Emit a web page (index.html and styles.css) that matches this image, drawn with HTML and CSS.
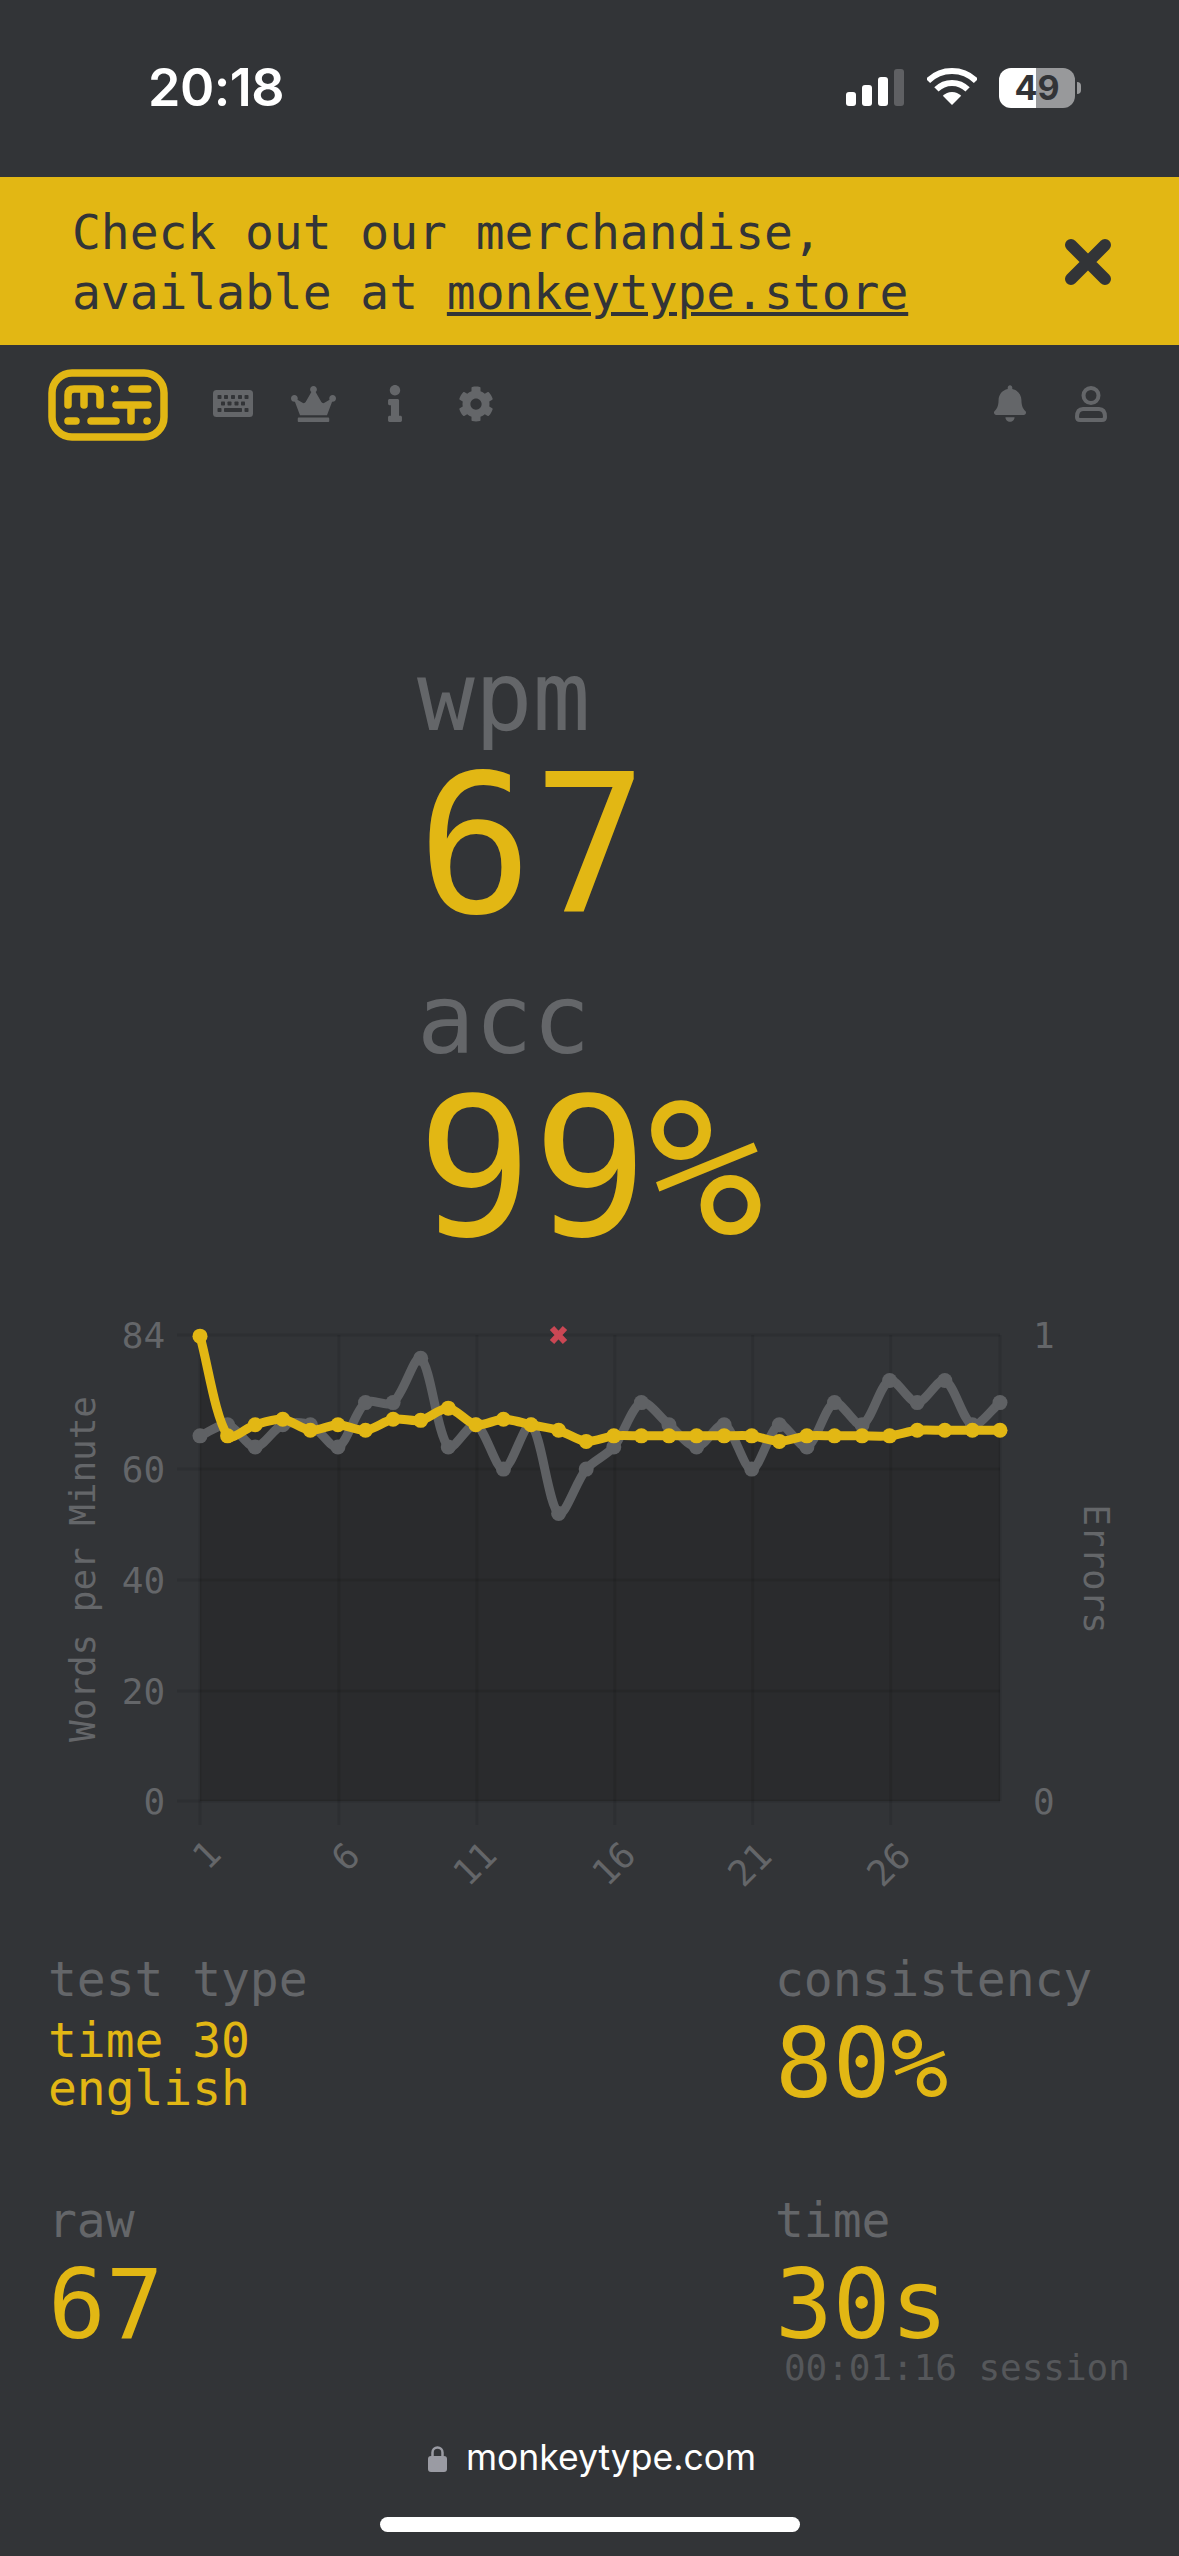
FILE: index.html
```html
<!DOCTYPE html>
<html lang="en">
<head>
    <meta charset="UTF-8">
    <meta name="viewport" content="width=device-width, initial-scale=1.0">
    <title>Monkeytype</title>
    <link rel="stylesheet" href="styles.css">
</head>
<body>
    <div class="status-bar">
        <span class="clock">20:18</span>
        <div class="status-icons">
            <div class="signal">
                <span class="bar bar1"></span>
                <span class="bar bar2"></span>
                <span class="bar bar3"></span>
                <span class="bar bar4"></span>
            </div>
            <svg class="wifi" viewBox="0 0 50 37">
                <path d="M1 13A34 34 0 0 1 49 13" fill="none" stroke="#fff" stroke-width="6"/>
                <path d="M9.4 21.4A22 22 0 0 1 40.6 21.4" fill="none" stroke="#fff" stroke-width="6"/>
                <path d="M25 37L15.8 27.8A13 13 0 0 1 34.2 27.8Z" fill="#fff"/>
            </svg>
            <div class="battery">49</div>
            <span class="battery-nub"></span>
        </div>
    </div>

    <div class="banner">
        <div class="banner-text">Check out our merchandise,<br>available at <a href="#">monkeytype.store</a></div>
        <svg class="banner-close" viewBox="0 0 48 46">
            <path d="M7 6L41 40M41 6L7 40" fill="none" stroke="#323437" stroke-width="12" stroke-linecap="round"/>
        </svg>
    </div>

    <div class="nav">
        <svg class="logo" viewBox="0 0 120 72" fill="none" stroke="#e2b714" stroke-width="7.5" stroke-linecap="round">
            <rect x="4" y="4" width="112" height="64" rx="20"/>
            <path d="M20 36V26Q20 20 26 20H46Q52 20 52 26V36M36 20V36"/>
            <path d="M66.7 20H66.8M84 20H99.7M68 36H100M83 36V52M20 52H28M43 52H68M99 52H99.1"/>
        </svg>
        <div class="nav-slot">
            <svg class="icon-keyboard" viewBox="0 0 40 27">
                <rect width="40" height="27" rx="3.5" fill="#646669"/>
                <g fill="#323437">
                    <rect x="4.5" y="5" width="4" height="4" rx=".8"/><rect x="11" y="5" width="4" height="4" rx=".8"/><rect x="18" y="5" width="4" height="4" rx=".8"/><rect x="25" y="5" width="4" height="4" rx=".8"/><rect x="31.500" y="5" width="4" height="4" rx=".8"/>
                    <rect x="8" y="11.500" width="4" height="4" rx=".8"/><rect x="14.500" y="11.500" width="4" height="4" rx=".8"/><rect x="21.500" y="11.500" width="4" height="4" rx=".8"/><rect x="28" y="11.500" width="4" height="4" rx=".8"/>
                    <rect x="4.500" y="18" width="4" height="4" rx=".8"/><rect x="11" y="18" width="18" height="4" rx=".8"/><rect x="31.500" y="18" width="4" height="4" rx=".8"/>
                </g>
            </svg>
        </div>
        <div class="nav-slot">
            <svg class="icon-crown" viewBox="0 0 640 512"><path fill="#646669" d="M528 448H112c-8.800 0-16 7.200-16 16v32c0 8.800 7.200 16 16 16h416c8.800 0 16-7.200 16-16v-32c0-8.800-7.200-16-16-16zm64-320c-26.500 0-48 21.500-48 48 0 7.100 1.600 13.700 4.400 19.800L476 239.200c-15.400 9.200-35.300 4-44.200-11.600L350.300 85C361 76.200 368 63 368 48c0-26.500-21.500-48-48-48s-48 21.500-48 48c0 15 7 28.200 17.700 37l-81.500 142.600c-8.900 15.600-28.900 20.800-44.200 11.600l-72.300-43.400c2.700-6 4.400-12.700 4.400-19.800 0-26.500-21.500-48-48-48S0 149.500 0 176s21.500 48 48 48c2.600 0 5.200-.4 7.700-.8L128 416h384l72.300-192.800c2.500.4 5.100.8 7.700.8 26.500 0 48-21.500 48-48s-21.500-48-48-48z"/></svg>
        </div>
        <div class="nav-slot">
            <svg class="icon-info" viewBox="0 0 192 512"><path fill="#646669" d="M20 424.229h20V279.771H20c-11.046 0-20-8.954-20-20V212c0-11.046 8.954-20 20-20h112c11.046 0 20 8.954 20 20v212.229h20c11.046 0 20 8.954 20 20V492c0 11.046-8.954 20-20 20H20c-11.046 0-20-8.954-20-20v-47.771c0-11.046 8.954-20 20-20zM96 0C56.235 0 24 32.235 24 72s32.235 72 72 72 72-32.235 72-72S135.764 0 96 0z"/></svg>
        </div>
        <div class="nav-slot">
            <svg class="icon-cog" viewBox="0 0 512 512"><path fill="#646669" d="M487.400 315.700l-42.600-24.600c4.300-23.200 4.300-47 0-70.200l42.600-24.600c4.900-2.800 7.100-8.600 5.500-14-11.100-35.600-30-67.800-54.700-94.600-3.800-4.100-10-5.100-14.800-2.300L380.800 110c-17.900-15.400-38.500-27.300-60.800-35.100V25.800c0-5.600-3.900-10.500-9.400-11.700-36.700-8.200-74.300-7.800-109.200 0-5.500 1.200-9.400 6.100-9.400 11.700V75c-22.200 7.900-42.800 19.800-60.800 35.100L88.700 85.500c-4.900-2.800-11-1.900-14.800 2.300-24.700 26.700-43.600 58.900-54.700 94.600-1.700 5.400.6 11.200 5.500 14L67.300 221c-4.300 23.200-4.300 47 0 70.200l-42.600 24.600c-4.900 2.800-7.100 8.600-5.500 14 11.100 35.600 30 67.800 54.700 94.600 3.800 4.100 10 5.100 14.800 2.300l42.600-24.600c17.900 15.400 38.500 27.300 60.800 35.100v49.200c0 5.600 3.900 10.500 9.400 11.700 36.700 8.200 74.300 7.800 109.200 0 5.500-1.200 9.400-6.100 9.400-11.700v-49.200c22.200-7.900 42.800-19.800 60.800-35.100l42.600 24.600c4.900 2.800 11 1.900 14.800-2.300 24.700-26.700 43.600-58.900 54.700-94.600 1.500-5.500-.7-11.300-5.600-14.100zM256 336c-44.100 0-80-35.900-80-80s35.900-80 80-80 80 35.900 80 80-35.900 80-80 80z"/></svg>
        </div>
        <div class="nav-spacer"></div>
        <div class="nav-slot">
            <svg class="icon-bell" viewBox="0 0 448 512"><path fill="#646669" d="M224 512c35.320 0 63.970-28.650 63.970-64H160.030c0 35.350 28.650 64 63.970 64zm215.390-149.710c-19.320-20.760-55.470-51.990-55.470-154.290 0-77.700-54.480-139.900-127.940-155.160V32c0-17.670-14.320-32-31.980-32s-31.980 14.330-31.980 32v20.840C118.560 68.100 64.080 130.300 64.080 208c0 102.300-36.150 133.530-55.470 154.290-6 6.450-8.660 14.160-8.610 21.710.11 16.400 12.980 32 32.100 32h383.800c19.120 0 32-15.600 32.100-32 .05-7.550-2.610-15.270-8.610-21.710z"/></svg>
        </div>
        <div class="nav-slot">
            <svg class="icon-user" viewBox="0 0 36 37" fill="none" stroke="#646669" stroke-width="4">
                <circle cx="18" cy="10.500" r="7.500"/>
                <path d="M10 24H26Q32 24 32 32Q32 35 29 35H7Q4 35 4 32Q4 24 10 24Z"/>
            </svg>
        </div>
    </div>

    <div class="big-stats">
        <div class="big-stat">
            <div class="big-label">wpm</div>
            <div class="big-value">67</div>
        </div>
        <div class="big-stat">
            <div class="big-label">acc</div>
            <div class="big-value">99%</div>
        </div>
    </div>

    <svg id="chart" class="chart" viewBox="0 1290 1179 640">
        <path id="wpmFill" fill="#2a2b2d"/>
        <g class="grid">
            <path d="M177 1335H1000M177 1469H1000M177 1580H1000M177 1691H1000M177 1801H1000"/>
            <path d="M200 1335V1825M338.900 1335V1825M476.900 1335V1825M614.800 1335V1825M752.700 1335V1825M890.700 1335V1825M1000 1335V1801"/>
        </g>
        <g class="axis-text">
            <text x="165" y="1348" text-anchor="end">84</text>
            <text x="165" y="1482" text-anchor="end">60</text>
            <text x="165" y="1593" text-anchor="end">40</text>
            <text x="165" y="1704" text-anchor="end">20</text>
            <text x="165" y="1814" text-anchor="end">0</text>
            <text x="1033" y="1348">1</text>
            <text x="1033" y="1814">0</text>
            <text transform="translate(95 1569) rotate(-90)" text-anchor="middle">Words per Minute</text>
            <text transform="translate(1084 1569) rotate(90)" text-anchor="middle">Errors</text>
            <text transform="translate(207 1855) rotate(-45)" text-anchor="middle" dy="12">1</text>
            <text transform="translate(346 1857) rotate(-45)" text-anchor="middle" dy="12">6</text>
            <text transform="translate(475 1864) rotate(-45)" text-anchor="middle" dy="12">11</text>
            <text transform="translate(614 1864) rotate(-45)" text-anchor="middle" dy="12">16</text>
            <text transform="translate(750 1865) rotate(-45)" text-anchor="middle" dy="12">21</text>
            <text transform="translate(889 1865) rotate(-45)" text-anchor="middle" dy="12">26</text>
        </g>
        <g id="rawLine" class="series series-raw"></g>
        <path d="M552 1328L565 1342M565 1328L552 1342" fill="none" stroke="#ca4754" stroke-width="6"/>
        <g id="wpmLine" class="series series-wpm"></g>
    </svg>

    <div class="more-stats">
        <div class="more-stat">
            <div class="small-label">test type</div>
            <div class="small-value">time 30<br>english</div>
        </div>
        <div class="more-stat">
            <div class="small-label">consistency</div>
            <div class="medium-value">80%</div>
        </div>
        <div class="more-stat">
            <div class="small-label">raw</div>
            <div class="medium-value">67</div>
        </div>
        <div class="more-stat">
            <div class="small-label">time</div>
            <div class="medium-value">30s</div>
            <div class="session">00:01:16 session</div>
        </div>
    </div>

    <div class="safari-bar">
        <div class="url">
            <svg class="lock" viewBox="0 0 19 27">
                <path d="M4.500 13V7.500a5 5 0 0 1 10 0V13" fill="none" stroke="#9a9ba3" stroke-width="2.500"/>
                <rect y="11" width="19" height="16" rx="3" fill="#9a9ba3"/>
            </svg>
            <span>monkeytype.com</span>
        </div>
        <div class="home-indicator"></div>
    </div>

    <script src="chart.js"></script>
</body>
</html>
```

FILE: styles.css
```css
body {
    margin: 0;
    width: 1179px;
    height: 2556px;
    overflow: hidden;
    background-color: #323437;
    color: #646669;
    font-family: "DejaVu Sans Mono", "Liberation Mono", monospace;
    letter-spacing: -0.004em;
}

/* phone status bar */
.status-bar {
    height: 177px;
    display: flex;
    justify-content: space-between;
    padding: 64px 98px 0 148px;
    box-sizing: border-box;
}
.clock {
    font-family: Inter, sans-serif;
    font-weight: 600;
    font-size: 52px;
    line-height: 48px;
    letter-spacing: -0.5px;
    color: white;
}
.status-icons {
    display: flex;
    align-items: flex-start;
    height: 44px;
    padding-top: 4px;
}
.signal {
    display: flex;
    align-items: flex-end;
    gap: 6px;
    height: 37px;
    margin-top: 1px;
    margin-right: 23px;
}
.bar {
    width: 10px;
    border-radius: 3px;
    background-color: white;
}
.bar1 { height: 14px; }
.bar2 { height: 21px; }
.bar3 { height: 29px; }
.bar4 { height: 37px; background-color: #5f6063; }
.wifi {
    width: 50px;
    height: 37px;
    margin-right: 22px;
}
.battery {
    width: 76px;
    height: 40px;
    border-radius: 12px;
    background: linear-gradient(90deg, white 49%, #98999b 49%);
    color: #323437;
    font-family: Inter, sans-serif;
    font-weight: 700;
    font-size: 34px;
    line-height: 40px;
    letter-spacing: 0;
    text-align: center;
}
.battery-nub {
    width: 4px;
    height: 12px;
    margin: 14px 0 0 2px;
    border-radius: 0 4px 4px 0;
    background-color: #98999b;
}

/* merch banner */
.banner {
    height: 168px;
    display: flex;
    justify-content: space-between;
    align-items: center;
    padding: 2px 67px 0 72px;
    box-sizing: border-box;
    background-color: #e2b714;
    color: #323437;
    font-size: 48px;
    line-height: 60px;
}
.banner-text a {
    color: #323437;
}
.banner-close {
    width: 48px;
    height: 46px;
}

/* top nav */
.nav {
    display: flex;
    align-items: center;
    height: 72px;
    padding: 24px 48px 0;
}
.logo {
    width: 120px;
    height: 72px;
    margin-right: 24px;
}
.nav-slot {
    width: 81px;
    height: 72px;
    margin-top: -3px;
    display: flex;
    justify-content: center;
    align-items: center;
}
.nav-spacer {
    flex: 1;
}
.icon-keyboard { width: 40px; height: 27px; }
.icon-crown { width: 45px; height: 36px; }
.icon-info { width: 14px; height: 37px; }
.icon-cog { width: 36px; height: 36px; }
.icon-bell { width: 32px; height: 37px; }
.icon-user { width: 36px; height: 37px; }

/* wpm + acc */
.big-stats {
    display: flex;
    flex-direction: column;
    gap: 30px;
    margin-top: 208px;
    padding-left: 417px;
}
.big-label {
    font-size: 96px;
    line-height: 96px;
}
.big-value {
    margin-top: 5px;
    font-size: 192px;
    line-height: 192px;
    color: #e2b714;
}

/* result graph */
.chart {
    display: block;
    width: 1179px;
    height: 640px;
    margin-top: 25px;
}
.grid path {
    fill: none;
    stroke: rgba(0, 0, 0, 0.09);
    stroke-width: 3;
}
.axis-text text {
    font-size: 36px;
    fill: #646669;
}
.series path {
    fill: none;
    stroke-width: 9;
}
.series-raw path { stroke: #5f6164; }
.series-raw circle { fill: #5f6164; }
.series-wpm path { stroke: #e2b714; }
.series-wpm circle { fill: #e2b714; }

/* bottom stats */
.more-stats {
    display: grid;
    grid-template-columns: 727px 1fr;
    grid-auto-rows: 241px;
    padding-left: 48px;
    margin-top: 25px;
}
.small-label {
    font-size: 48px;
    line-height: 48px;
}
.small-value {
    margin-top: 13px;
    font-size: 48px;
    line-height: 48px;
    color: #e2b714;
}
.medium-value {
    margin-top: 13px;
    font-size: 96px;
    line-height: 96px;
    color: #e2b714;
}
.session {
    margin: -3px 0 0 9px;
    font-size: 36px;
    line-height: 36px;
    color: #55575a;
}

/* safari url bar */
.safari-bar {
    display: flex;
    flex-direction: column;
    align-items: center;
    margin-top: -2px;
    padding-left: 5px;
}
.url {
    display: flex;
    align-items: center;
    gap: 19px;
    color: white;
    font-family: Inter, sans-serif;
    font-size: 35.5px;
    line-height: 46px;
    letter-spacing: 0;
}
.lock {
    width: 19px;
    height: 27px;
}
.home-indicator {
    width: 420px;
    height: 15px;
    margin-top: 36px;
    margin-left: -5px;
    border-radius: 8px;
    background-color: white;
}
```

FILE: chart.js
```js
const rawData = [66, 68, 64, 68, 68, 64, 72, 72, 80, 64, 68, 60, 68, 52, 60, 64, 72, 68, 64, 68, 60, 68, 64, 72, 68, 76, 72, 76, 68, 72];
const wpmData = [84, 66, 68, 69, 67, 68, 67, 69, 68.8, 71, 68, 69, 68, 67, 65, 66, 66, 66, 66, 66, 66, 65, 66, 66, 66, 66, 67, 67, 67, 67];
const TENSION = 0.3;

function toPoints(data) {
    return data.map((v, i) => ({ x: 200 + i * 27.586, y: 1801.5 - v * 5.54 }));
}

// same spline as a line chart with tension
function splinePath(pts) {
    const ctrl = pts.map((p, i) => {
        const a = pts[i - 1] || p;
        const b = pts[i + 1] || p;
        const d01 = Math.hypot(p.x - a.x, p.y - a.y);
        const d12 = Math.hypot(b.x - p.x, b.y - p.y);
        const sum = d01 + d12 || 1;
        const fa = TENSION * d01 / sum;
        const fb = TENSION * d12 / sum;
        return {
            px: p.x - fa * (b.x - a.x),
            py: p.y - fa * (b.y - a.y),
            nx: p.x + fb * (b.x - a.x),
            ny: p.y + fb * (b.y - a.y)
        };
    });
    let d = 'M' + pts[0].x + ' ' + pts[0].y;
    for (let i = 1; i < pts.length; i++) {
        d += 'C' + ctrl[i - 1].nx + ' ' + ctrl[i - 1].ny + ' ' + ctrl[i].px + ' ' + ctrl[i].py + ' ' + pts[i].x + ' ' + pts[i].y;
    }
    return d;
}

function drawSeries(id, data) {
    const pts = toPoints(data);
    const g = document.getElementById(id);
    const ns = 'http://www.w3.org/2000/svg';
    const line = document.createElementNS(ns, 'path');
    line.setAttribute('d', splinePath(pts));
    g.appendChild(line);
    pts.forEach((p) => {
        const dot = document.createElementNS(ns, 'circle');
        dot.setAttribute('cx', p.x);
        dot.setAttribute('cy', p.y);
        dot.setAttribute('r', 7.5);
        g.appendChild(dot);
    });
}

drawSeries('rawLine', rawData);
drawSeries('wpmLine', wpmData);
document.getElementById('wpmFill').setAttribute('d', splinePath(toPoints(wpmData)) + 'L1000 1801L200 1801Z');
```
